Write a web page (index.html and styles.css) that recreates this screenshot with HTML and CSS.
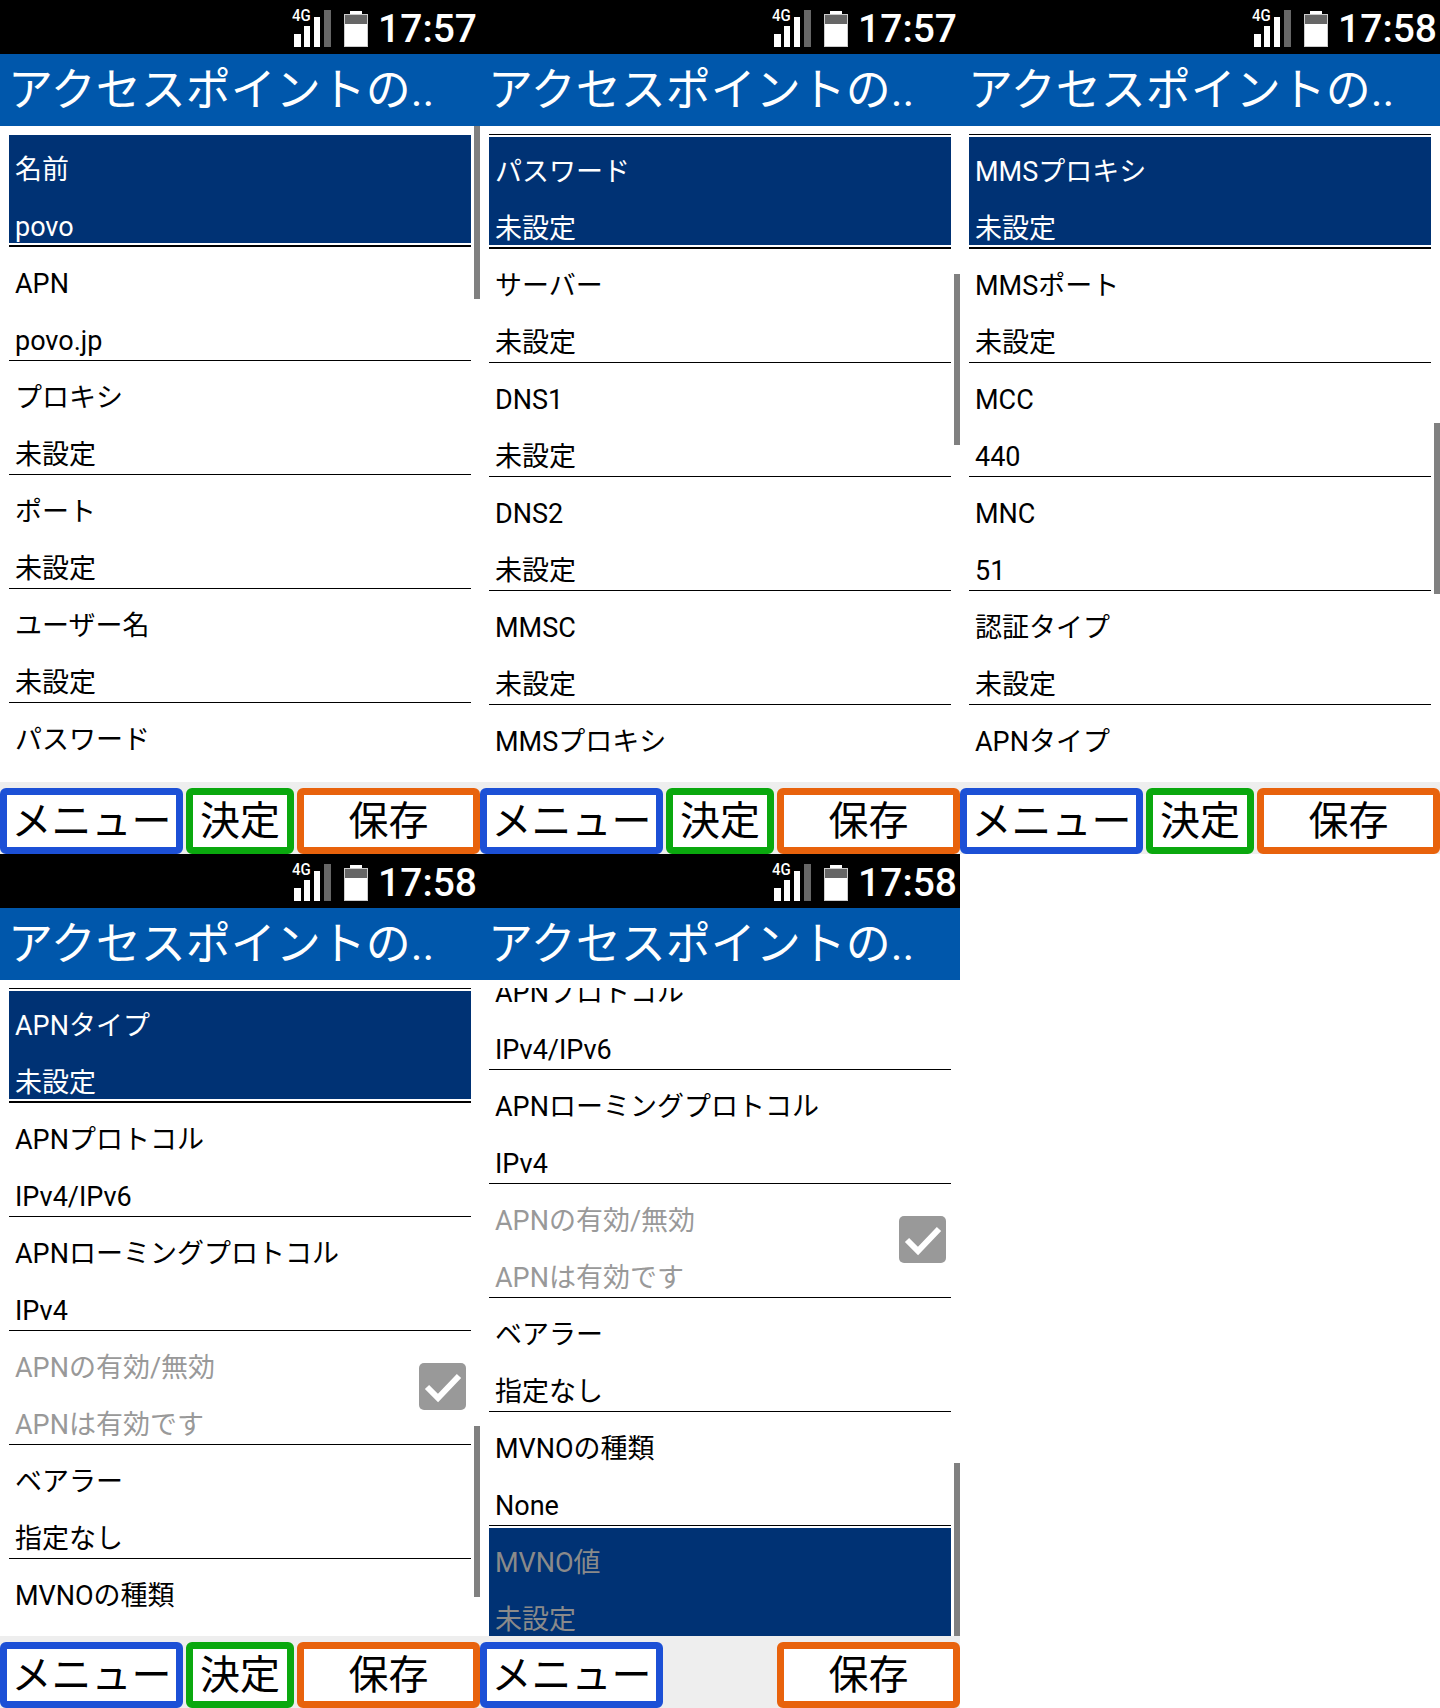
FILE: index.html
```html
<!DOCTYPE html>
<html lang="ja">
<head>
<meta charset="utf-8">
<title>アクセスポイントの編集</title>
<link rel="stylesheet" href="styles.css">
</head>
<body>
<main class="sheet">

<section class="phone">
  <header class="status">
    <svg class="net" viewBox="0 0 44 40" width="44" height="40"><rect x="4" y="25" width="7" height="13" fill="#fff"/><rect x="14" y="17" width="6" height="21" fill="#fff"/><rect x="24" y="8" width="6" height="30" fill="#fff"/><rect x="34" y="1" width="7" height="37" fill="#666"/></svg>
    <span class="net-label">4G</span>
    <svg class="battery" viewBox="0 0 24 36" width="24" height="36"><rect x="6" y="0" width="12" height="4" fill="#fff"/><rect x="0" y="3" width="24" height="33" fill="#ccc"/><rect x="1" y="4" width="22" height="31" fill="#fff"/><rect x="1" y="4" width="22" height="9" fill="#666"/></svg>
    <span class="clock">17:57</span>
  </header>
  <h1 class="title">アクセスポイントの..</h1>
  <div class="list">
    <div class="rows rows-top">
      <div class="row is-selected"><div class="cell"><div class="label">名前</div><div class="value">povo</div></div></div>
      <div class="row"><div class="cell"><div class="label">APN</div><div class="value">povo.jp</div></div></div>
      <div class="row"><div class="cell"><div class="label">プロキシ</div><div class="value">未設定</div></div></div>
      <div class="row"><div class="cell"><div class="label">ポート</div><div class="value">未設定</div></div></div>
      <div class="row"><div class="cell"><div class="label">ユーザー名</div><div class="value">未設定</div></div></div>
      <div class="row"><div class="cell"><div class="label">パスワード</div></div></div>
    </div>
    <div class="thumb thumb-1"></div>
  </div>
  <footer class="keys">
    <div class="key key-menu">メニュー</div><div class="key key-ok">決定</div><div class="key key-save">保存</div>
  </footer>
</section>

<section class="phone">
  <header class="status">
    <svg class="net" viewBox="0 0 44 40" width="44" height="40"><rect x="4" y="25" width="7" height="13" fill="#fff"/><rect x="14" y="17" width="6" height="21" fill="#fff"/><rect x="24" y="8" width="6" height="30" fill="#fff"/><rect x="34" y="1" width="7" height="37" fill="#666"/></svg>
    <span class="net-label">4G</span>
    <svg class="battery" viewBox="0 0 24 36" width="24" height="36"><rect x="6" y="0" width="12" height="4" fill="#fff"/><rect x="0" y="3" width="24" height="33" fill="#ccc"/><rect x="1" y="4" width="22" height="31" fill="#fff"/><rect x="1" y="4" width="22" height="9" fill="#666"/></svg>
    <span class="clock">17:57</span>
  </header>
  <h1 class="title">アクセスポイントの..</h1>
  <div class="list">
    <div class="rows rows-ruled">
      <div class="row is-selected"><div class="cell"><div class="label">パスワード</div><div class="value">未設定</div></div></div>
      <div class="row"><div class="cell"><div class="label">サーバー</div><div class="value">未設定</div></div></div>
      <div class="row"><div class="cell"><div class="label">DNS1</div><div class="value">未設定</div></div></div>
      <div class="row"><div class="cell"><div class="label">DNS2</div><div class="value">未設定</div></div></div>
      <div class="row"><div class="cell"><div class="label">MMSC</div><div class="value">未設定</div></div></div>
      <div class="row"><div class="cell"><div class="label">MMSプロキシ</div></div></div>
    </div>
    <div class="thumb thumb-2"></div>
  </div>
  <footer class="keys">
    <div class="key key-menu">メニュー</div><div class="key key-ok">決定</div><div class="key key-save">保存</div>
  </footer>
</section>

<section class="phone">
  <header class="status">
    <svg class="net" viewBox="0 0 44 40" width="44" height="40"><rect x="4" y="25" width="7" height="13" fill="#fff"/><rect x="14" y="17" width="6" height="21" fill="#fff"/><rect x="24" y="8" width="6" height="30" fill="#fff"/><rect x="34" y="1" width="7" height="37" fill="#666"/></svg>
    <span class="net-label">4G</span>
    <svg class="battery" viewBox="0 0 24 36" width="24" height="36"><rect x="6" y="0" width="12" height="4" fill="#fff"/><rect x="0" y="3" width="24" height="33" fill="#ccc"/><rect x="1" y="4" width="22" height="31" fill="#fff"/><rect x="1" y="4" width="22" height="9" fill="#666"/></svg>
    <span class="clock">17:58</span>
  </header>
  <h1 class="title">アクセスポイントの..</h1>
  <div class="list">
    <div class="rows rows-ruled">
      <div class="row is-selected"><div class="cell"><div class="label">MMSプロキシ</div><div class="value">未設定</div></div></div>
      <div class="row"><div class="cell"><div class="label">MMSポート</div><div class="value">未設定</div></div></div>
      <div class="row"><div class="cell"><div class="label">MCC</div><div class="value">440</div></div></div>
      <div class="row"><div class="cell"><div class="label">MNC</div><div class="value">51</div></div></div>
      <div class="row"><div class="cell"><div class="label">認証タイプ</div><div class="value">未設定</div></div></div>
      <div class="row"><div class="cell"><div class="label">APNタイプ</div></div></div>
    </div>
    <div class="thumb thumb-3"></div>
  </div>
  <footer class="keys">
    <div class="key key-menu">メニュー</div><div class="key key-ok">決定</div><div class="key key-save">保存</div>
  </footer>
</section>

<section class="phone">
  <header class="status">
    <svg class="net" viewBox="0 0 44 40" width="44" height="40"><rect x="4" y="25" width="7" height="13" fill="#fff"/><rect x="14" y="17" width="6" height="21" fill="#fff"/><rect x="24" y="8" width="6" height="30" fill="#fff"/><rect x="34" y="1" width="7" height="37" fill="#666"/></svg>
    <span class="net-label">4G</span>
    <svg class="battery" viewBox="0 0 24 36" width="24" height="36"><rect x="6" y="0" width="12" height="4" fill="#fff"/><rect x="0" y="3" width="24" height="33" fill="#ccc"/><rect x="1" y="4" width="22" height="31" fill="#fff"/><rect x="1" y="4" width="22" height="9" fill="#666"/></svg>
    <span class="clock">17:58</span>
  </header>
  <h1 class="title">アクセスポイントの..</h1>
  <div class="list">
    <div class="rows rows-ruled">
      <div class="row is-selected"><div class="cell"><div class="label">APNタイプ</div><div class="value">未設定</div></div></div>
      <div class="row"><div class="cell"><div class="label">APNプロトコル</div><div class="value">IPv4/IPv6</div></div></div>
      <div class="row"><div class="cell"><div class="label">APNローミングプロトコル</div><div class="value">IPv4</div></div></div>
      <div class="row is-disabled"><div class="cell"><div class="label">APNの有効/無効</div><div class="value">APNは有効です</div><svg class="check" viewBox="0 0 47 47" width="47" height="47"><rect width="47" height="47" rx="5" fill="#999"/><path d="M8 24 L19 35 L40 13" fill="none" stroke="#fff" stroke-width="6"/></svg></div></div>
      <div class="row"><div class="cell"><div class="label">ベアラー</div><div class="value">指定なし</div></div></div>
      <div class="row"><div class="cell"><div class="label">MVNOの種類</div></div></div>
    </div>
    <div class="thumb thumb-4"></div>
  </div>
  <footer class="keys">
    <div class="key key-menu">メニュー</div><div class="key key-ok">決定</div><div class="key key-save">保存</div>
  </footer>
</section>

<section class="phone">
  <header class="status">
    <svg class="net" viewBox="0 0 44 40" width="44" height="40"><rect x="4" y="25" width="7" height="13" fill="#fff"/><rect x="14" y="17" width="6" height="21" fill="#fff"/><rect x="24" y="8" width="6" height="30" fill="#fff"/><rect x="34" y="1" width="7" height="37" fill="#666"/></svg>
    <span class="net-label">4G</span>
    <svg class="battery" viewBox="0 0 24 36" width="24" height="36"><rect x="6" y="0" width="12" height="4" fill="#fff"/><rect x="0" y="3" width="24" height="33" fill="#ccc"/><rect x="1" y="4" width="22" height="31" fill="#fff"/><rect x="1" y="4" width="22" height="9" fill="#666"/></svg>
    <span class="clock">17:58</span>
  </header>
  <h1 class="title">アクセスポイントの..</h1>
  <div class="list">
    <div class="rows rows-end">
      <div class="row"><div class="cell"><div class="label">APNプロトコル</div><div class="value">IPv4/IPv6</div></div></div>
      <div class="row"><div class="cell"><div class="label">APNローミングプロトコル</div><div class="value">IPv4</div></div></div>
      <div class="row is-disabled"><div class="cell"><div class="label">APNの有効/無効</div><div class="value">APNは有効です</div><svg class="check" viewBox="0 0 47 47" width="47" height="47"><rect width="47" height="47" rx="5" fill="#999"/><path d="M8 24 L19 35 L40 13" fill="none" stroke="#fff" stroke-width="6"/></svg></div></div>
      <div class="row"><div class="cell"><div class="label">ベアラー</div><div class="value">指定なし</div></div></div>
      <div class="row"><div class="cell"><div class="label">MVNOの種類</div><div class="value">None</div></div></div>
      <div class="row is-selected is-disabled"><div class="cell"><div class="label">MVNO値</div><div class="value">未設定</div></div></div>
    </div>
    <div class="thumb thumb-5"></div>
  </div>
  <footer class="keys">
    <div class="key key-menu">メニュー</div><div class="key key-save">保存</div>
  </footer>
</section>

</main>
</body>
</html>
```

FILE: styles.css
```css
* { box-sizing: border-box; }

html, body { margin: 0; padding: 0; background: #fff; }

body {
  font-family: Roboto, "Noto Sans CJK JP", sans-serif;
  color: #000;
}

.sheet {
  display: grid;
  grid-template-columns: repeat(3, 480px);
  grid-auto-rows: 854px;
}

.phone {
  display: flex;
  flex-direction: column;
  height: 854px;
  overflow: hidden;
}

.status {
  position: relative;
  height: 54px;
  flex: none;
  background: #000;
  display: flex;
  align-items: flex-start;
  justify-content: flex-end;
  color: #fff;
}

.net { margin-top: 9px; margin-right: 10px; }

.net-label {
  position: absolute;
  left: 292px;
  top: 6px;
  font-size: 17px;
  line-height: 18px;
  font-weight: 500;
  transform: scaleX(.88);
  transform-origin: left center;
}

.battery { margin-top: 11px; margin-right: 10px; }

.clock {
  font-size: 39px;
  line-height: 58px;
  font-weight: 500;
  margin-right: 3px;
}

.title {
  height: 72px;
  flex: none;
  margin: 0;
  padding-left: 8px;
  background: #0057ab;
  color: #fff;
  font-size: 45px;
  font-weight: 400;
  line-height: 74px;
  white-space: nowrap;
}

.list {
  position: relative;
  flex: 1;
  min-height: 0;
  display: flex;
  flex-direction: column;
  padding: 8px 9px 0;
}

.rows {
  flex: 1;
  min-height: 0;
  overflow: hidden;
}

.rows-top::before {
  content: "";
  display: block;
  margin-top: -1px;
}

.rows-ruled::before {
  content: "";
  display: block;
  height: 1px;
  background: #000;
}

.rows-end::before {
  content: "";
  display: block;
  margin-top: -32px;
}

.row {
  height: 114px;
  padding-top: 2px;
}

.row::after {
  content: "";
  display: block;
  height: 1px;
  background: #000;
  margin-top: 3px;
}

.cell {
  position: relative;
  height: 108px;
  padding: 18px 6px 0;
  font-size: 27px;
  line-height: 34px;
  white-space: nowrap;
}

.value { margin-top: 23px; }

.is-selected .cell { background: #003274; color: #fff; }
.is-selected::after { height: 2px; margin-top: 2px; }

.is-disabled .cell { color: #999; }
.is-selected.is-disabled .cell { color: #8a8a8a; }

.check {
  position: absolute;
  right: 5px;
  top: 30px;
}

.thumb {
  position: absolute;
  right: 0;
  width: 6px;
  height: 171px;
  background: #808080;
}

.thumb-1 { top: 0; height: 173px; }
.thumb-2 { top: 148px; }
.thumb-3 { top: 297px; }
.thumb-4 { top: 446px; }
.thumb-5 { top: 483px; height: 173px; }

.keys {
  height: 72px;
  flex: none;
  background: #eee;
  padding-top: 6px;
  display: grid;
  grid-template-columns: 183px 108px 183px;
  column-gap: 3px;
}

.key {
  display: flex;
  align-items: center;
  justify-content: center;
  background: #fff;
  border: 7px solid;
  border-radius: 6px;
  padding-top: 2px;
  font-size: 40px;
  line-height: 50px;
  white-space: nowrap;
}

.key-menu { border-color: #1c50d6; }
.key-ok { border-color: #0aa80e; }
.key-save { border-color: #e8620c; grid-column: 3; }
```
